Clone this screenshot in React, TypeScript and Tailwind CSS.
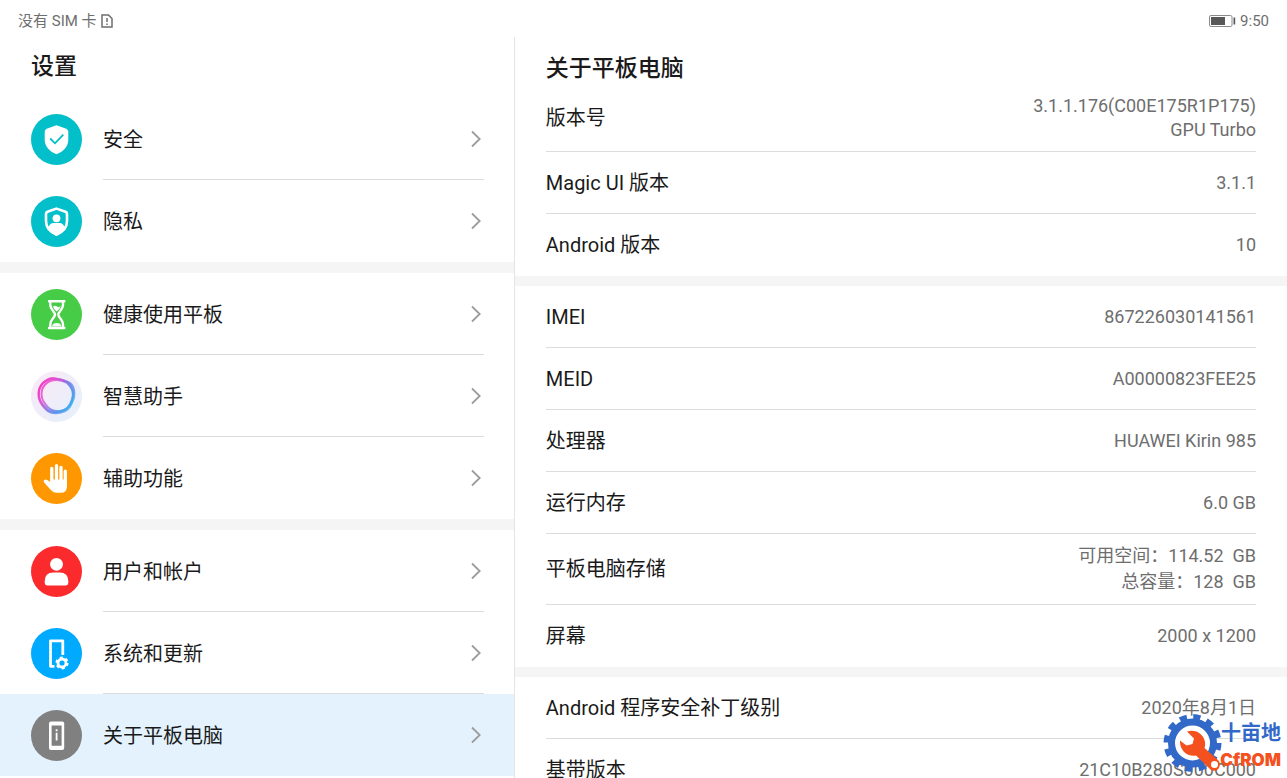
import type { ReactNode } from "react";
import { clsx } from "clsx";

interface MenuItem {
    label: string;
    color: string;
    icon: ReactNode;
    active?: boolean;
}

interface InfoItem {
    label: string;
    value: string[];
    size?: "first" | "tall";
}

const SecurityIcon = () => (
    <>
        <path d="M25.5 11.2 35.3 14.7q2 .8 2 3v7.500c0 7-4.300 12-11.800 15-7.500-3-11.800-8-11.800-15v-7.500q0-2.200 2-3z" fill="#fff" />
        <path d="m19.200 24.500 4.800 4.800 8.300-8.600" fill="none" stroke="#02bfc9" strokeWidth="1.800" />
    </>
);

const PrivacyIcon = () => (
    <>
        <path
            d="M25.5 12.6 34.5 15.8q1.500.600 1.500 2.300v7c0 6.300-3.500 10.700-10.500 13.600-7-2.900-10.500-7.300-10.500-13.600v-7q0-1.700 1.500-2.300z"
            fill="none"
            stroke="#fff"
            strokeWidth="2.600"
        />
        <circle cx="25.500" cy="22.300" r="3.900" fill="#fff" />
        <path d="M17.500 31.500q1-4.500 5-4.500h6q4 0 5 4.500-2.500 4.500-8 7-5.500-2.500-8-7z" fill="#fff" />
    </>
);

const HourglassIcon = () => (
    <>
        <path
            d="M18 12.300h15.400M18 39h15.400M19.300 12.500v3.500c0 5 4.700 6.500 4.700 9.600s-4.700 4.700-4.700 9.700V39M32 12.500v3.500c0 5-4.700 6.500-4.700 9.600s4.700 4.700 4.700 9.700V39"
            fill="none"
            stroke="#fff"
            strokeWidth="2.400"
            strokeLinecap="round"
        />
        <path d="M22 17.500q2-1.300 4 0t3.500-.500q-.500 3.500-3.900 5.500-2.800-1.700-3.600-5z" fill="#fff" />
        <path d="M20.800 37.500q1-3.400 4.900-3.400t4.900 3.400z" fill="#fff" />
    </>
);

const AssistantIcon = () => (
    <>
        <defs>
            <linearGradient id="ring" x1="0" y1="0.1" x2="1" y2="0.8">
                <stop offset="0" stopColor="#f92fc0" />
                <stop offset="0.3" stopColor="#e04bd0" />
                <stop offset="0.6" stopColor="#6f7be8" />
                <stop offset="1" stopColor="#35b0f0" />
            </linearGradient>
            <linearGradient id="halo" x1="0" y1="0" x2="1" y2="1">
                <stop offset="0" stopColor="#fbe9f5" />
                <stop offset="1" stopColor="#e3f1fd" />
            </linearGradient>
        </defs>
        <circle cx="25.500" cy="25.500" r="25.500" fill="url(#halo)" />
        <g fill="none" stroke="url(#ring)">
            <path d="M16 9q4-3 9-1.500l11 3q6 2 7 9 1 7-2 12-3 8-11 10-10 2-15-3Q7 31 7.500 22q.5-8 8.500-13z" strokeWidth="2.200" opacity="0.8" />
            <path d="M20 8q9-1 16 3 7 5 6 14-1 12-11 15-9 3-15-2-7-6-8-13Q7 11 20 8z" strokeWidth="2" opacity="0.8" />
            <path d="M19 10q9-3 17 2 8 7 5 16-3 11-12 12-9 1-14-6-6-7-4-15 2-6 8-9z" strokeWidth="2" opacity="0.8" />
        </g>
    </>
);

const HandIcon = () => (
    <>
        <g stroke="#fff" strokeWidth="3.300" strokeLinecap="round">
            <path d="M20.800 15.500V30M25.500 12.700V30M30 14.500V30M34.300 18.200V33" />
        </g>
        <path
            d="M19.200 26.500h16.700v7.200q0 6-6 6h-4q-3.500 0-5.800-2.500l-7-7.600q-1.200-1.700.2-2.700 1.200-.800 2.900.200l3 2z"
            fill="#fff"
        />
    </>
);

const UserIcon = () => (
    <>
        <circle cx="25.500" cy="18.300" r="6.400" fill="#fff" />
        <path d="M13.700 35q0-8.600 8.600-8.600h6.400q8.600 0 8.600 8.600v2q0 2.400-2.400 2.400H16.100q-2.400 0-2.400-2.400z" fill="#fff" />
    </>
);

const SystemIcon = () => (
    <>
        <path d="M23.500 38.300h-4V12.800h12.300V27" fill="none" stroke="#fff" strokeWidth="2.800" strokeLinejoin="round" />
        <circle cx="31" cy="35" r="4" fill="none" stroke="#fff" strokeWidth="2.800" />
        <circle cx="31" cy="35" r="5.700" fill="none" stroke="#fff" strokeWidth="1.800" strokeDasharray="3 2.970" />
    </>
);

const AboutIcon = () => (
    <>
        <rect x="18" y="11.500" width="15.200" height="28.500" rx="2" fill="#fff" />
        <path d="M20.600 15.400h10v20.400h-10z" fill="#808080" />
        <path d="M25.600 19.300v2M25.600 22.800v7.600" stroke="#fff" strokeWidth="1.800" />
    </>
);

const MENU: MenuItem[][] = [
    [
        { label: "安全", color: "bg-[#02bfc9]", icon: <SecurityIcon /> },
        { label: "隐私", color: "bg-[#02bfc9]", icon: <PrivacyIcon /> },
    ],
    [
        { label: "健康使用平板", color: "bg-[#47cc47]", icon: <HourglassIcon /> },
        { label: "智慧助手", color: "bg-[#f0edfa]", icon: <AssistantIcon /> },
        { label: "辅助功能", color: "bg-[#ff9800]", icon: <HandIcon /> },
    ],
    [
        { label: "用户和帐户", color: "bg-[#fa2a2d]", icon: <UserIcon /> },
        { label: "系统和更新", color: "bg-[#00aaff]", icon: <SystemIcon /> },
        { label: "关于平板电脑", color: "bg-[#808080]", icon: <AboutIcon />, active: true },
    ],
];

const INFO: InfoItem[][] = [
    [
        { label: "版本号", value: ["3.1.1.176(C00E175R1P175)", "GPU Turbo"], size: "first" },
        { label: "Magic UI 版本", value: ["3.1.1"] },
        { label: "Android 版本", value: ["10"] },
    ],
    [
        { label: "IMEI", value: ["867226030141561"] },
        { label: "MEID", value: ["A00000823FEE25"] },
        { label: "处理器", value: ["HUAWEI Kirin 985"] },
        { label: "运行内存", value: ["6.0 GB"] },
        { label: "平板电脑存储", value: ["可用空间：114.52  GB", "总容量：128  GB"], size: "tall" },
        { label: "屏幕", value: ["2000 x 1200"] },
    ],
    [
        { label: "Android 程序安全补丁级别", value: ["2020年8月1日"] },
        { label: "基带版本", value: ["21C10B280S000C000"] },
    ],
];

function StatusBar() {
    return (
        <header className="flex h-[37px] shrink-0 items-center justify-between px-[18px] pt-1.5 text-[15px] text-[#6e6e6e]">
            <div className="flex items-center gap-1">
                <span>没有 SIM 卡</span>
                <svg className="mb-0.5 h-4 w-3" viewBox="0 0 12 16" fill="none" stroke="currentColor" strokeWidth="1.500">
                    <path d="M1 2h6.500L11 5.500V14H1z" />
                    <path d="M6 5v4M6 10.500V12" />
                </svg>
            </div>
            <div className="flex items-center gap-1">
                <svg className="mb-0.5 h-3 w-[27px]" viewBox="0 0 27 12">
                    <rect x="0.500" y="0.500" width="22.500" height="11" rx="1.500" fill="none" stroke="#8a8a8a" />
                    <rect x="2" y="2" width="14" height="8" fill="#585858" />
                    <rect x="24.500" y="2.500" width="1.700" height="7" fill="#585858" />
                </svg>
                <span>9:50</span>
            </div>
        </header>
    );
}

function MenuRow({ item, last }: { item: MenuItem; last: boolean }) {
    return (
        <a
            href="#"
            aria-current={item.active ? "page" : undefined}
            className={clsx("flex h-[82px] items-center gap-[21px] pr-[30px] pl-[31px]", item.active && "bg-[#e4f2fe]")}
        >
            <span className={clsx("size-[51px] shrink-0 overflow-hidden rounded-full", item.color)}>
                <svg className="size-full" viewBox="0 0 51 51">
                    {item.icon}
                </svg>
            </span>
            <span className={clsx("flex flex-1 items-center justify-between self-stretch border-b pr-[3px]", last ? "border-transparent" : "border-[#dcdcdc]")}>
                <span className="pt-0.5">{item.label}</span>
                <svg className="h-[18px] w-2.5" viewBox="0 0 10 18" fill="none" stroke="#9c9c9c" strokeWidth="1.800">
                    <path d="m1 1.500 7.700 7.500L1 16.500" />
                </svg>
            </span>
        </a>
    );
}

function InfoRow({ item, last }: { item: InfoItem; last: boolean }) {
    return (
        <div
            className={clsx(
                "mx-[31px] flex items-center justify-between border-b",
                last ? "border-transparent" : "border-[#dcdcdc]",
                item.size === "first" ? "h-[68px]" : item.size === "tall" ? "h-[71px]" : "h-[62px]"
            )}
        >
            <dt>{item.label}</dt>
            <dd className={clsx("text-right text-[18px] whitespace-pre text-[#6e6e6e]", item.size === "tall" ? "leading-[26px]" : "leading-6")}>
                {item.value.map((line) => (
                    <p key={line}>{line}</p>
                ))}
            </dd>
        </div>
    );
}

function Watermark() {
    return (
        <div className="absolute right-1.5 bottom-1 flex h-[60px] w-[118px] font-bold">
            <svg className="absolute inset-0 size-full" viewBox="0 0 118 60">
                <circle cx="29.500" cy="29" r="21" fill="#fff" stroke="#3269c9" strokeWidth="7" />
                <circle cx="29.500" cy="29" r="26.200" fill="none" stroke="#3269c9" strokeWidth="5.500" strokeDasharray="7.200 6.518" />
                <path
                    d="M24 17.500C32 14.500 41 20 42 28c.3 2.500 0 4.500-.5 6L55 46c5 5-1 14-7.500 9.500L33 41.500C24 43 16.500 36 17 26.500l6.500 5 6-1.500 1.500-5.500z"
                    fill="#f4511e"
                />
                <circle cx="51.500" cy="50.500" r="3.500" fill="#fff" />
            </svg>
            <div className="relative ml-auto flex w-[60px] flex-col items-end whitespace-nowrap">
                <span className="text-[20px] leading-[38px] text-[#3269c9]">十亩地</span>
                <span className="font-['Inter'] text-[17px] leading-4 font-black text-[#f4511e]">CfROM</span>
            </div>
        </div>
    );
}

export default function App() {
    return (
        <div className="relative flex h-screen flex-col overflow-hidden bg-white font-['Roboto','Noto_Sans_CJK_SC',sans-serif] text-[20px] text-[#1a1a1a]">
            <StatusBar />
            <div className="flex min-h-0 flex-1">
                <nav className="w-2/5 shrink-0 overflow-hidden border-r border-[#e5e5e5]">
                    <h1 className="h-[61px] px-[31px] pt-3 text-[23px] leading-9 font-medium">设置</h1>
                    {MENU.map((group, g) => (
                        <section key={g} className={clsx(g > 0 && "border-t-[11px] border-[#f5f5f5]")}>
                            {group.map((item, i) => (
                                <MenuRow key={item.label} item={item} last={i === group.length - 1} />
                            ))}
                        </section>
                    ))}
                </nav>
                <main className="flex-1 overflow-hidden">
                    <h2 className="h-[47px] px-[31px] pt-3.5 text-[23px] leading-9 font-medium">关于平板电脑</h2>
                    {INFO.map((group, g) => (
                        <dl key={g} className={clsx(g > 0 && "border-t-[10px] border-[#f5f5f5]")}>
                            {group.map((item, i) => (
                                <InfoRow key={item.label} item={item} last={i === group.length - 1} />
                            ))}
                        </dl>
                    ))}
                </main>
            </div>
            <Watermark />
        </div>
    );
}
